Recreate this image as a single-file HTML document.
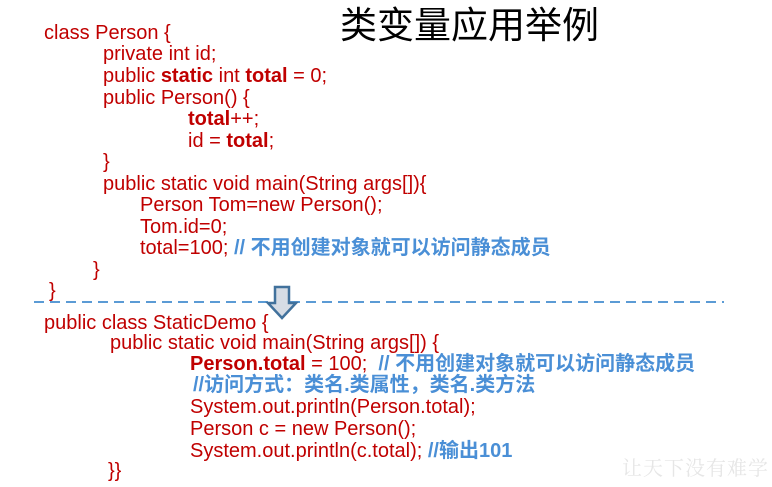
<!DOCTYPE html>
<html><head><meta charset="utf-8"><style>
body{margin:0;width:772px;height:487px;background:#fff;overflow:hidden;position:relative;font-family:"Liberation Sans","Noto Sans CJK SC",sans-serif;}
.l{position:absolute;font-size:20px;color:#c00000;white-space:nowrap;line-height:20px;margin-top:1px;}
.c{color:#4a8fd6;font-weight:bold;}
b{font-weight:bold;}
.t{position:absolute;left:340px;top:-1px;font-size:37px;font-family:"Noto Sans CJK SC",sans-serif;color:#000;white-space:nowrap;line-height:46px;}
.w{position:absolute;left:622px;top:452px;font-size:20px;color:#e6e6e6;font-family:"Noto Serif CJK SC",serif;white-space:nowrap;letter-spacing:1px;}
</style></head><body>
<div class="t">类变量应用举例</div>
<div class="l" style="left:44px;top:22px">class Person {</div>
<div class="l" style="left:103px;top:43px">private int id;</div>
<div class="l" style="left:103px;top:65px">public <b>static</b> int <b>total</b> = 0;</div>
<div class="l" style="left:103px;top:87px">public Person() {</div>
<div class="l" style="left:188px;top:108px"><b>total</b>++;</div>
<div class="l" style="left:188px;top:130px">id = <b>total</b>;</div>
<div class="l" style="left:103px;top:151px">}</div>
<div class="l" style="left:103px;top:173px">public static void main(String args[]){</div>
<div class="l" style="left:140px;top:194px">Person Tom=new Person();</div>
<div class="l" style="left:140px;top:216px">Tom.id=0;</div>
<div class="l" style="left:140px;top:237px">total=100; <span class="c">// 不用创建对象就可以访问静态成员</span></div>
<div class="l" style="left:93px;top:259px">}</div>
<div class="l" style="left:49px;top:280px">}</div>
<svg style="position:absolute;left:0;top:0" width="772" height="487">
<line x1="34" y1="302" x2="724" y2="302" stroke="#5b9bd5" stroke-width="2" stroke-dasharray="10,6"/>
<path d="M275 287 H289 V303 H296 L282 318 L268 303 H275 Z" fill="#d6dce5" stroke="#41719c" stroke-width="2.5"/>
</svg>
<div class="l" style="left:44px;top:312px">public class StaticDemo {</div>
<div class="l" style="left:110px;top:332px">public static void main(String args[]) {</div>
<div class="l" style="left:190px;top:353px"><b>Person.total</b> = 100;&nbsp; <span class="c">// 不用创建对象就可以访问静态成员</span></div>
<div class="l c" style="left:193px;top:374px">//访问方式：类名.类属性，类名.类方法</div>
<div class="l" style="left:190px;top:396px">System.out.println(Person.total);</div>
<div class="l" style="left:190px;top:418px">Person c = new Person();</div>
<div class="l" style="left:190px;top:440px">System.out.println(c.total); <span class="c">//输出101</span></div>
<div class="l" style="left:108px;top:460px">}}</div>
<div class="w">让天下没有难学</div>
</body></html>
